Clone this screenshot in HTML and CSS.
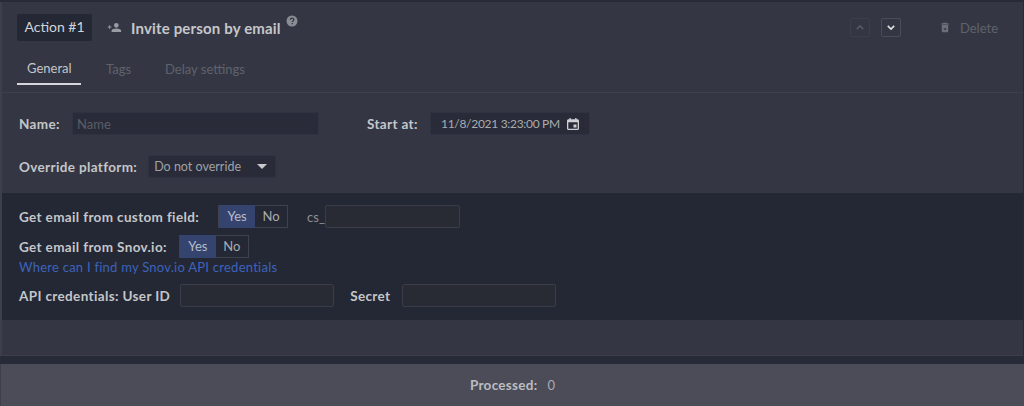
FILE: index.html
```html
<!DOCTYPE html>
<html lang="en">
<head>
<meta charset="utf-8">
<title>Action</title>
<link rel="stylesheet" href="styles.css">
</head>
<body>
<div class="card">
  <header class="head">
    <span class="badge">Action #1</span>
    <svg class="person" viewBox="0 0 16 12" width="15" height="11"><path d="M10 1a2.600 2.600 0 1 1 0 5.200 2.600 2.600 0 0 1 0-5.200zM10 7c2.400 0 5.200 1 5.200 2.400V11H4.800V9.400C4.800 8 7.600 7 10 7zM2.200 3.500h1V5h1.500v1H3.200v1.500h-1V6H.7V5h1.500z"/></svg>
    <span class="title">Invite person by email</span>
    <svg class="help" viewBox="0 0 12 12" width="12" height="12"><circle cx="6" cy="6" r="5.500"/><path class="help-mark" d="M4.300 4.700c0-2.200 3.500-2.200 3.500-.1 0 1.300-1.500 1.300-1.500 2.500M6.300 8v1.200"/></svg>
    <span class="spacer"></span>
    <button class="arrow arrow-off" type="button"><svg viewBox="0 0 10 6" width="8" height="5"><path d="M1 5l4-4 4 4"/></svg></button>
    <button class="arrow" type="button"><svg viewBox="0 0 10 6" width="8" height="5"><path d="M1 1l4 4 4-4"/></svg></button>
    <span class="delete">
      <svg viewBox="0 0 10 12" width="8" height="11"><path fill-rule="evenodd" d="M3 0h4l.6 1H10v1.200H0V1h2.400zM1 3h8v7.500A1.500 1.500 0 0 1 7.500 12h-5A1.500 1.500 0 0 1 1 10.500zM3 7h4L5 9.800z"/></svg>
      Delete
    </span>
  </header>
  <nav class="tabs">
    <a class="tab tab-active">General</a>
    <a class="tab">Tags</a>
    <a class="tab">Delay settings</a>
  </nav>
  <section class="form">
    <div class="row row-name">
      <label class="label label-name">Name:</label>
      <span class="field field-name">Name</span>
      <label class="label label-start">Start at:</label>
      <span class="field field-date"><span class="date-text">11/8/2021 3:23:00 PM</span>
        <svg viewBox="0 0 12 12" width="12" height="12"><path fill-rule="evenodd" d="M2.500 0v1.200h-1C.7 1.200 0 1.900 0 2.700v7.800c0 .8.700 1.500 1.500 1.500h9c.8 0 1.500-.7 1.500-1.500V2.700c0-.8-.7-1.500-1.500-1.500h-1V0H8.200v1.200H3.800V0zM1.300 4.200h9.400v6.500H1.300zM6.500 6.500h3v3h-3z"/></svg>
      </span>
    </div>
    <div class="row row-platform">
      <label class="label">Override platform:</label>
      <span class="field field-select">Do not override<i class="caret"></i></span>
    </div>
  </section>
  <section class="panel">
    <div class="line line-custom">
      <label class="label">Get email from custom field:</label>
      <span class="toggle"><b>Yes</b><span>No</span></span>
      <span class="prefix">cs_</span><span class="box box-cs"></span>
    </div>
    <div class="line line-snov">
      <label class="label">Get email from Snov.io:</label>
      <span class="toggle toggle-snov"><b>Yes</b><span>No</span></span>
    </div>
    <a class="link">Where can I find my Snov.io API credentials</a>
    <div class="line line-api">
      <label class="label">API credentials: User ID</label>
      <span class="box box-api"></span>
      <label class="label label-secret">Secret</label>
      <span class="box box-api"></span>
    </div>
  </section>
</div>
<footer class="foot"><strong>Processed:</strong><span>0</span></footer>
</body>
</html>
```
FILE: styles.css
```css
* { box-sizing: border-box; }
html, body { margin: 0; height: 406px; overflow: hidden; }
body {
  background: #272b37;
  font-family: Lato, "Liberation Sans", sans-serif;
  font-size: 13px;
  color: #c9cacd;
  padding-top: 2px;
}
.card {
  height: 354px;
  margin-right: 1px;
  background: #343743;
  border-left: 2px solid #3d404b;
  border-bottom: 1px solid #3d404b;
}
.head {
  display: flex;
  align-items: center;
  height: 50px;
  padding: 0 25px 0 15px;
}
.badge {
  background: #242834;
  border-radius: 2px;
  width: 75px;
  height: 27px;
  line-height: 26px;
  text-align: center;
  font-size: 14px;
  color: #d2d3d6;
}
.person { fill: #9a9ca3; margin: 1px 0 0 15px; }
.title { margin: 2px 0 0 9px; font-size: 15px; font-weight: 700; letter-spacing: .16px; color: #c6c7ca; }
.help { margin: -12px 0 0 5px; fill: #8b8d94; }
.help-mark { fill: none; stroke: #343743; stroke-width: 1.300; }
.spacer { flex: 1; }
.arrow {
  width: 20px;
  height: 19px;
  margin-left: 11px;
  padding: 0;
  background: transparent;
  border: 1px solid #4a4d58;
  border-radius: 2px;
  display: flex;
  align-items: center;
  justify-content: center;
}
.arrow svg { fill: none; stroke: #e2e3e5; stroke-width: 2; }
.arrow-off { border-color: #3c3f4a; }
.arrow-off svg { stroke: #575a63; }
.delete {
  display: flex;
  align-items: center;
  gap: 11px;
  margin-left: 40px;
  padding-top: 1px;
  color: #5f626c;
  font-size: 13px;
}
.delete svg { fill: #6e7079; }
.tabs {
  display: flex;
  height: 41px;
  padding-left: 15px;
  border-bottom: 1px solid #3e414c;
}
.tab {
  height: 33px;
  padding: 7px 10px 0 10px;
  margin-right: 14px;
  color: #5f626c;
  line-height: 20px;
}
.tab-active {
  width: 64px;
  margin-right: 15px;
  padding: 6px 0 0 10px;
  color: #c4c5c9;
  border-bottom: 2px solid #d5d6d9;
}
.form { height: 100px; padding: 0 0 0 17px; }
.label { font-weight: 700; font-size: 13.500px; letter-spacing: .36px; color: #c5c6c9; white-space: nowrap; }
.row { display: flex; align-items: center; }
.row-name { padding-top: 19px; height: 42px; }
.label-name { width: 53px; flex: none; }
.row-platform { margin-top: 20px; }
.field {
  display: flex;
  align-items: center;
  height: 23px;
  background: #292c38;
  border: 1px solid #2f3240;
  border-radius: 2px;
  font-size: 13px;
}
.field-name { width: 247px; padding-left: 4px; color: #5a5d67; }
.label-start { width: 63px; margin-left: 48px; flex: none; }
.field-date { width: 160px; justify-content: space-between; padding: 0 10px; color: #a9abb0; }
.date-text { white-space: nowrap; font-size: 12px; letter-spacing: -.3px; }
.field-date svg { fill: #cfd0d3; flex: none; }
.field-select { width: 128px; margin-left: 11px; padding-left: 5px; color: #9fa1a7; font-size: 12.500px; }
.caret {
  width: 0;
  height: 0;
  margin-left: 16px;
  border: 5px solid transparent;
  border-top: 5px solid #c9cacd;
  border-bottom: 0;
}
.panel {
  height: 127px;
  padding: 12px 0 0 17px;
  background: #242834;
}
.line { display: flex; align-items: center; }
.toggle {
  display: flex;
  height: 23px;
  margin-left: 19px;
  border: 1px solid #3f424d;
  font-size: 13px;
}
.toggle-snov { margin-left: 12px; }
.toggle b {
  width: 36px;
  height: 23px;
  margin: -1px 0;
  background: #34446f;
  color: #b9bdc9;
  font-weight: 400;
  text-align: center;
  line-height: 23px;
}
.toggle span { width: 32px; color: #a9abb0; text-align: center; line-height: 21px; }
.prefix { margin-left: 19px; color: #8e9097; font-size: 13px; }
.box { display: block; height: 23px; background: #282b33; border: 1px solid #3a3d48; border-radius: 2px; }
.box-cs { width: 135px; }
.line-snov { margin-top: 7px; }
.link { display: block; height: 19px; line-height: 19px; color: #3d63bd; letter-spacing: .25px; }
.line-api { margin-top: 7px; }
.box-api { width: 154px; margin-left: 10px; }
.label-secret { margin-left: 16px; }
.line-api .box:last-child { margin-left: 12px; }
.foot {
  display: flex;
  justify-content: center;
  align-items: center;
  gap: 10px;
  height: 42px;
  margin-top: 8px;
  background: #4b4c57;
  border-left: 1px solid #3d404b;
  color: #a9abb0;
}
.foot strong { font-weight: 700; font-size: 13.500px; letter-spacing: .3px; color: #bcbdc1; }
```
